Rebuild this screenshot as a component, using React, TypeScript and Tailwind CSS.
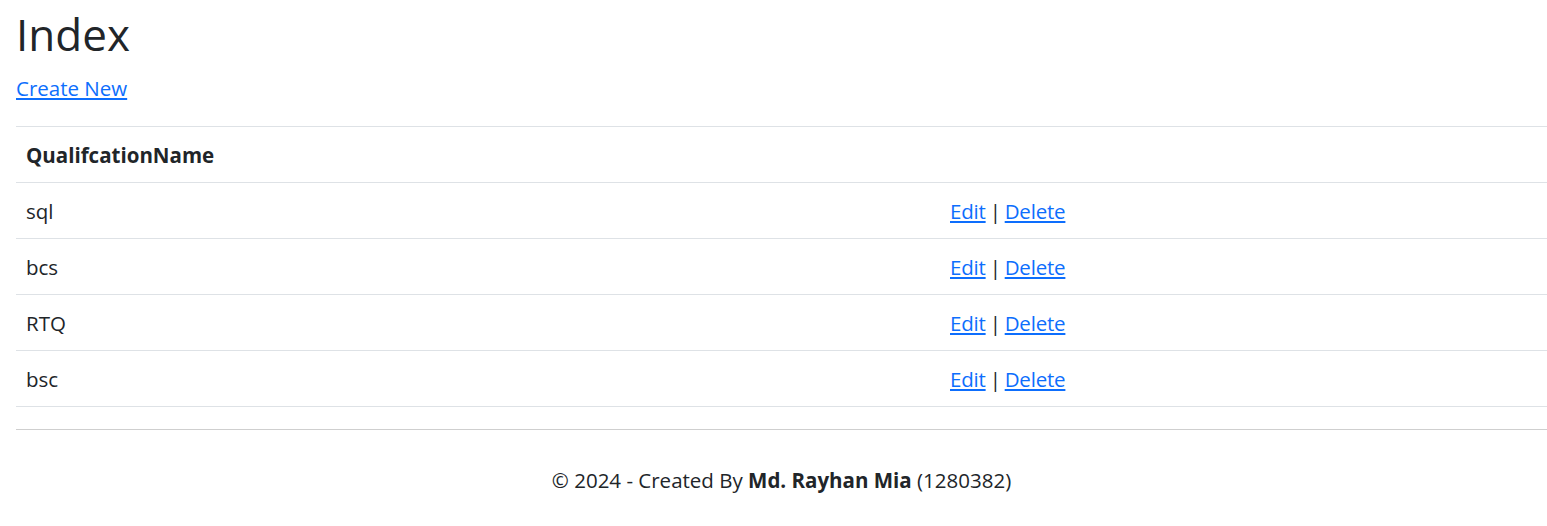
import React from "react";

const rows = ["sql", "bcs", "RTQ", "bsc"];

export default function App() {
  return (
    <div className="w-[1547px] h-[526px] bg-white text-[#212529] font-['Open_Sans',sans-serif] text-[20.5px] leading-[30px] overflow-hidden">
      <div className="pl-4 pt-[7px]">
        <h1 className="text-[44px] leading-[55px] font-normal m-0">Index</h1>
        <p className="mt-[11px] mb-[23px]">
          <a href="#" className="text-[#0d6efd] underline">Create New</a>
        </p>
        <table className="w-full border-collapse">
          <thead>
            <tr className="border-y border-[#dee2e6]">
              <th className="h-[56px] px-[10px] text-left font-bold align-middle">QualifcationName</th>
              <th className="h-[56px] px-[10px]"></th>
            </tr>
          </thead>
          <tbody>
            {rows.map((r) => (
              <tr key={r} className="border-b border-[#dee2e6]">
                <td className="h-[56px] px-[10px] w-[924px] align-middle">{r}</td>
                <td className="h-[56px] px-[10px] align-middle tracking-[-0.2px]">
                  <a href="#" className="text-[#0d6efd] underline">Edit</a>
                  <span className="mx-[4px]">|</span>
                  <a href="#" className="text-[#0d6efd] underline">Delete</a>
                </td>
              </tr>
            ))}
          </tbody>
        </table>
        <div className="mt-[22px] border-t border-[#cfcfcf] h-[100px] flex items-center justify-center">
          <span>
            © 2024 - Created By <b className="font-bold">Md. Rayhan Mia</b> (1280382)
          </span>
        </div>
      </div>
    </div>
  );
}
